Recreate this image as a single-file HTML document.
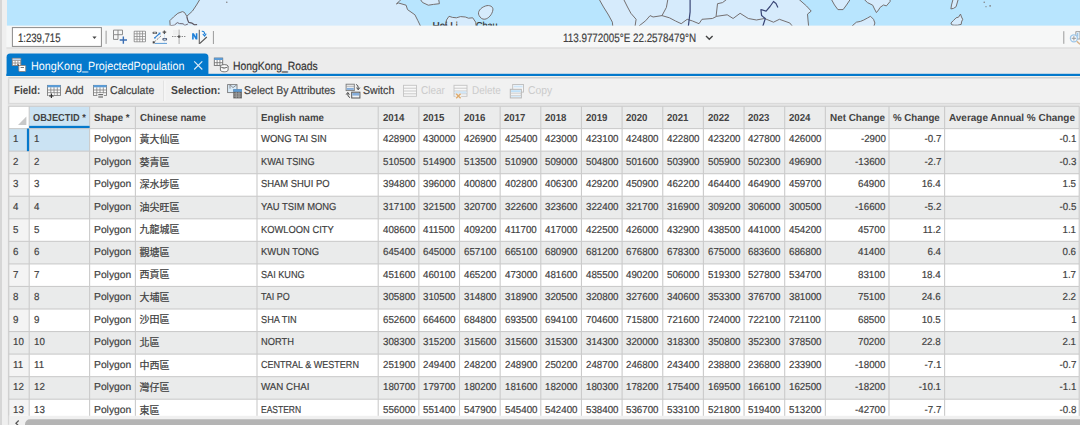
<!DOCTYPE html>
<html lang="en">
<head>
<meta charset="utf-8">
<title>HongKong_ProjectedPopulation</title>
<style>
html,body{margin:0;padding:0;}
body{width:1080px;height:425px;overflow:hidden;position:relative;background:#ececec;font-family:"Liberation Sans",sans-serif;color:#4a4a4a;}
#app{position:absolute;left:0;top:0;width:1080px;height:425px;overflow:hidden;}
.abs{position:absolute;}
#leftstrip{left:0;top:0;width:1.8px;height:425px;background:#d6d6d6;}
#leftstrip2{left:1.8px;top:0;width:5.2px;height:425px;background:#efefef;}
#map{left:6.5px;top:0;width:1073.5px;height:25.6px;}
.x{position:absolute;white-space:pre;line-height:14px;height:14px;text-rendering:geometricPrecision;}
.k{-webkit-text-stroke:0.18px currentColor;}
</style>
</head>
<body>
<div id="app">
<div id="leftstrip" class="abs"></div>
<div id="leftstrip2" class="abs"></div>
<svg id="map" class="abs" width="1073.5" height="25.6" viewBox="6.5 0 1073.5 25.6" preserveAspectRatio="none">
<rect x="0" y="0" width="1080" height="26" fill="#b8e5fe"/>
<g fill="#d6ebfc" stroke="#6f6868" stroke-width="0.95" stroke-linejoin="round">
<!-- west land mass with peninsula -->
<path d="M199.6 -1 L196 5 L192 11 L186.3 16.3 L184 12.5 L182 11.6 L177.4 13.3 L173 17 L169.3 20.7 L170 30 L421.9 30 L417.4 20.7 L414.4 14.8 L407 9.6 L405.6 5.2 L398 3 L395.9 3.9 L399 1 L401.1 -1 Z"/>
<path d="M419.6 -1 L422 2.5 L427.8 5.2 L433 4.4 L438.9 3.7 L438.1 -1 Z"/>
<path d="M478.6 15.5 C476.5 12 480 7.6 485 6 C489 4.6 493 6.6 492.4 10 C491.6 14.6 488 18.6 484.4 19.2 C481.6 19.6 479.6 17.6 478.6 15.5 Z"/>
<path d="M444.8 26 L446 20 L448.5 16.3 L452 17.4 L455.9 17.8 L460 16.6 L464.8 17 L468 18.2 L472.2 17.8 L475.2 22.2 L475.9 30 Z"/>
<!-- main land -->
<path d="M598.5 -1 L603 7 L608 15 L611.9 22.2 L612.6 30 L808.5 30 L807.5 20 L807 14.1 L810.7 11.1 L806 6 L798.1 -1 Z"/>
<path d="M830.7 -1 L834 5 L837.4 9.6 L842.6 9.6 L846 5 L850 -1 Z"/>
<path d="M863.3 -1 L867 2.6 L872.2 5.2 L874 9 L875.9 12.6 L878 10 L879.6 7.4 L883 5 L885.9 5.9 L889.6 1.5 L889.6 -1 Z"/>
<path d="M851.5 26 L855.9 22.2 L860 21.4 L863.3 20 L867 18 L870 16.3 L873 19.3 L874.4 23 L872.2 30 Z"/>
<path d="M952.6 -1 L951 5 L950.4 8.9 L953 8.4 L955.6 6.7 L957.8 -1 Z"/>
<path d="M950.4 23 L953 20.5 L955.6 17.8 L958 17.2 L960 14.1 L961 17 L962.2 19.3 L961 22 L960.7 24.4 L957 25.2 L954 25.2 L951.5 25 Z"/>
</g>
<g fill="none" stroke="#6f6868" stroke-width="0.95" stroke-linejoin="round">
<path d="M186.3 16.3 L187 19.5 L188.2 22.4 L191.6 23.2 L193.8 24.8 L196.6 24.6" stroke="#5c5660" stroke-width="1.2"/>
<path d="M170.2 25.6 L173.8 25.2 L176.8 22.6 L179 23.6 L182.6 23.8 L184.4 25.4 L187.4 24" stroke="#6a6470" stroke-width="1"/>
<path d="M623 -1 L627 7 L630.4 13.3 L635.6 19.3 L634 30"/>
<path d="M638.5 26 L645.2 20.7 L649.6 15.6 L652.6 17 L661.5 15.6 L668.9 17.8 L675 21 L680.7 23.7 L686.7 19.3 L692 21 L698.5 23.7 L701.5 19.3 L711.9 18.5 L716.3 16.3 L726.7 14.8 L732.6 18.5 L739.6 13.3 L747.8 18.5 L755.9 20 L764 18.5 L773 22.2 L778.9 19.3 L789.3 23 L795 30"/>
<path d="M667.4 -1 L665.9 7.4 L661.5 15.6"/>
<path d="M726.7 -1 L722 2.6 L717 3.7 L715.6 16.3"/>
</g>
<g fill="none" stroke="#3a4676" stroke-width="1.2" stroke-linejoin="round">
<path d="M689.6 -1 L689.6 11.9 L687.4 30"/>
<path d="M777.4 7.4 L775.5 3.5 L773 1.5 L769.5 6.5 L765.6 11.1 L760.4 9.6 L761.1 15.6 L764.8 18.5 L761.1 30"/>
</g>
<g fill="#7b7474"><circle cx="983.7" cy="2.2" r="0.7"/><circle cx="989.6" cy="5.9" r="0.8"/><circle cx="985.5" cy="6.7" r="0.6"/><circle cx="226.3" cy="2.2" r="0.7"/></g>
<clipPath id="cpl"><rect x="430" y="20" width="27" height="6"/></clipPath><text x="432" y="29" clip-path="url(#cpl)" font-family="Liberation Sans, sans-serif" font-size="10" text-rendering="geometricPrecision" fill="#2c2c2c" stroke="#2c2c2c" stroke-width="0.25">Hei Ling</text>
<text x="475.6" y="29" font-family="Liberation Sans, sans-serif" font-size="10" text-rendering="geometricPrecision" fill="#2c2c2c" stroke="#2c2c2c" stroke-width="0.25" textLength="21.5" lengthAdjust="spacingAndGlyphs">Chau</text>
</svg>

<svg id="chrome" width="1080" height="425" viewBox="0 0 1080 425" style="position:absolute;left:0;top:0">
<!-- map toolbar -->
<rect x="6.4" y="25.6" width="1073.6" height="21.6" fill="#f6f7f7"/>
<rect x="6.4" y="47.2" width="1073.6" height="1.8" fill="#e1e1e1"/>
<rect x="12.4" y="27.6" width="89" height="18.8" fill="#fff" stroke="#8a8a8a" stroke-width="1"/>
<!-- tab bar -->
<rect x="6.4" y="49" width="1073.6" height="25" fill="#ececec"/>
<path d="M6.6 76 V57.2 Q6.6 53.6 10.2 53.6 H204.8 Q208.4 53.6 208.4 57.2 V76 Z" fill="#0479cc"/>
<rect x="6.4" y="73.8" width="1073.6" height="2.25" fill="#0479cc"/>
<rect x="6.4" y="76.05" width="1073.6" height="0.9" fill="#fbf6f0"/>
<!-- field bar -->
<rect x="8.2" y="76.9" width="1071.8" height="1.8" fill="#d1d1d1"/>
<rect x="8.2" y="78.7" width="1071.8" height="24.15" fill="#f1f1f1"/>
<rect x="8.2" y="78.75" width="1.1" height="346" fill="#d2d2d2"/>
<rect x="8.2" y="102.85" width="1071.8" height="1.6" fill="#dadada"/><rect x="8.2" y="104.45" width="1071.8" height="1.8" fill="#e8e8e8"/>
<!-- right strip + scrollbar -->
<rect x="1079.6" y="106" width="0.4" height="319" fill="#e3e3e3"/>
<rect x="9.3" y="416.2" width="1070.7" height="8.8" fill="#f0f0f0"/>
<rect x="25" y="419.3" width="1070" height="10" rx="5" fill="#b4b4b4"/>
</svg>
<svg id="grid" width="1080" height="425" viewBox="0 0 1080 425" style="position:absolute;left:0;top:0">
<rect x="8.75" y="106.25" width="1070.45" height="309.55" fill="#fff"/>
<rect x="29.20" y="106.25" width="1050.00" height="22.35" fill="#ebecec"/>
<rect x="8.75" y="128.60" width="20.45" height="22.55" fill="#f4f4f4"/>
<rect x="8.75" y="151.15" width="1070.45" height="22.55" fill="#eaebeb"/>
<rect x="8.75" y="173.70" width="20.45" height="22.55" fill="#f4f4f4"/>
<rect x="8.75" y="196.25" width="1070.45" height="22.55" fill="#eaebeb"/>
<rect x="8.75" y="218.80" width="20.45" height="22.55" fill="#f4f4f4"/>
<rect x="8.75" y="241.35" width="1070.45" height="22.55" fill="#eaebeb"/>
<rect x="8.75" y="263.90" width="20.45" height="22.55" fill="#f4f4f4"/>
<rect x="8.75" y="286.45" width="1070.45" height="22.55" fill="#eaebeb"/>
<rect x="8.75" y="309.00" width="20.45" height="22.55" fill="#f4f4f4"/>
<rect x="8.75" y="331.55" width="1070.45" height="22.55" fill="#eaebeb"/>
<rect x="8.75" y="354.10" width="20.45" height="22.55" fill="#f4f4f4"/>
<rect x="8.75" y="376.65" width="1070.45" height="22.55" fill="#eaebeb"/>
<rect x="8.75" y="399.20" width="20.45" height="16.60" fill="#f4f4f4"/>
<rect x="29.20" y="106.25" width="60.40" height="22.35" fill="#cbe3f3"/>
<rect x="8.75" y="128.60" width="80.85" height="22.55" fill="#cbe3f3"/>
<rect x="8.75" y="128.05" width="1070.45" height="1.1" fill="#cbcbcb"/>
<rect x="8.75" y="150.60" width="1070.45" height="1.1" fill="#cbcbcb"/>
<rect x="8.75" y="173.15" width="1070.45" height="1.1" fill="#cbcbcb"/>
<rect x="8.75" y="195.70" width="1070.45" height="1.1" fill="#cbcbcb"/>
<rect x="8.75" y="218.25" width="1070.45" height="1.1" fill="#cbcbcb"/>
<rect x="8.75" y="240.80" width="1070.45" height="1.1" fill="#cbcbcb"/>
<rect x="8.75" y="263.35" width="1070.45" height="1.1" fill="#cbcbcb"/>
<rect x="8.75" y="285.90" width="1070.45" height="1.1" fill="#cbcbcb"/>
<rect x="8.75" y="308.45" width="1070.45" height="1.1" fill="#cbcbcb"/>
<rect x="8.75" y="331.00" width="1070.45" height="1.1" fill="#cbcbcb"/>
<rect x="8.75" y="353.55" width="1070.45" height="1.1" fill="#cbcbcb"/>
<rect x="8.75" y="376.10" width="1070.45" height="1.1" fill="#cbcbcb"/>
<rect x="8.75" y="398.65" width="1070.45" height="1.1" fill="#cbcbcb"/>
<rect x="8.75" y="105.70" width="1070.45" height="1.1" fill="#cbcbcb"/>
<rect x="8.20" y="106.25" width="1.1" height="309.55" fill="#cbcbcb"/>
<rect x="28.65" y="106.25" width="1.1" height="309.55" fill="#cbcbcb"/>
<rect x="89.05" y="106.25" width="1.1" height="309.55" fill="#cbcbcb"/>
<rect x="134.85" y="106.25" width="1.1" height="309.55" fill="#cbcbcb"/>
<rect x="256.45" y="106.25" width="1.1" height="309.55" fill="#cbcbcb"/>
<rect x="377.65" y="106.25" width="1.1" height="309.55" fill="#cbcbcb"/>
<rect x="418.30" y="106.25" width="1.1" height="309.55" fill="#cbcbcb"/>
<rect x="458.95" y="106.25" width="1.1" height="309.55" fill="#cbcbcb"/>
<rect x="499.60" y="106.25" width="1.1" height="309.55" fill="#cbcbcb"/>
<rect x="540.25" y="106.25" width="1.1" height="309.55" fill="#cbcbcb"/>
<rect x="580.90" y="106.25" width="1.1" height="309.55" fill="#cbcbcb"/>
<rect x="621.55" y="106.25" width="1.1" height="309.55" fill="#cbcbcb"/>
<rect x="662.20" y="106.25" width="1.1" height="309.55" fill="#cbcbcb"/>
<rect x="702.85" y="106.25" width="1.1" height="309.55" fill="#cbcbcb"/>
<rect x="743.50" y="106.25" width="1.1" height="309.55" fill="#cbcbcb"/>
<rect x="784.15" y="106.25" width="1.1" height="309.55" fill="#cbcbcb"/>
<rect x="824.80" y="106.25" width="1.1" height="309.55" fill="#cbcbcb"/>
<rect x="888.45" y="106.25" width="1.1" height="309.55" fill="#cbcbcb"/>
<rect x="944.05" y="106.25" width="1.1" height="309.55" fill="#cbcbcb"/>
<rect x="1078.65" y="106.25" width="1.1" height="309.55" fill="#cbcbcb"/>
<rect x="29.20" y="125.85" width="60.40" height="2.2" fill="#0479cc"/>
<rect x="26.90" y="128.60" width="2.2" height="22.55" fill="#0479cc"/>
<path d="M18 125 L26.4 125 L26.4 116.6 Z" fill="#c8c8c8"/>
<g fill="#414141" stroke="#414141" stroke-width="0.22" stroke-linejoin="round" font-family="&quot;Liberation Sans&quot;, &quot;Noto Sans CJK TC&quot;, sans-serif" font-size="10">
<text x="139.60" y="143.00">黃大仙區</text>
<text x="139.60" y="165.55">葵青區</text>
<text x="139.60" y="188.10">深水埗區</text>
<text x="139.60" y="210.65">油尖旺區</text>
<text x="139.60" y="233.20">九龍城區</text>
<text x="139.60" y="255.75">觀塘區</text>
<text x="139.60" y="278.30">西貢區</text>
<text x="139.60" y="300.85">大埔區</text>
<text x="139.60" y="323.40">沙田區</text>
<text x="139.60" y="345.95">北區</text>
<text x="139.60" y="368.50">中西區</text>
<text x="139.60" y="391.05">灣仔區</text>
<text x="139.60" y="413.60">東區</text>
</g>
</svg>
<svg id="icons" width="1080" height="425" viewBox="0 0 1080 425" style="position:absolute;left:0;top:0">
<!-- ===== map toolbar ===== -->
<rect x="105.6" y="30.7" width="1" height="13.2" fill="#9b9b9b"/>
<!-- grid + plus -->
<g fill="none" stroke="#808080" stroke-width="0.9">
<path d="M113.5 30.1 H122.5 V34.7 H113.5 Z M118 30.1 V39.4 M113.5 34.7 V39.4 H118"/>
</g>
<path d="M119.7 40 H127 M123.35 36.4 V43.7" stroke="#3b6fb4" stroke-width="1.4" fill="none"/>
<!-- 4x4 grid -->
<rect x="133.7" y="30.7" width="12.2" height="11.6" rx="1" fill="#8e8e8e"/>
<g fill="#fbfbfb">
<rect x="134.6" y="31.6" width="2" height="1.85"/><rect x="137.4" y="31.6" width="2" height="1.85"/><rect x="140.2" y="31.6" width="2" height="1.85"/><rect x="143" y="31.6" width="2" height="1.85"/>
<rect x="134.6" y="34.25" width="2" height="1.85"/><rect x="137.4" y="34.25" width="2" height="1.85"/><rect x="140.2" y="34.25" width="2" height="1.85"/><rect x="143" y="34.25" width="2" height="1.85"/>
<rect x="134.6" y="36.9" width="2" height="1.85"/><rect x="137.4" y="36.9" width="2" height="1.85"/><rect x="140.2" y="36.9" width="2" height="1.85"/><rect x="143" y="36.9" width="2" height="1.85"/>
<rect x="134.6" y="39.55" width="2" height="1.85"/><rect x="137.4" y="39.55" width="2" height="1.85"/><rect x="140.2" y="39.55" width="2" height="1.85"/><rect x="143" y="39.55" width="2" height="1.85"/>
</g>
<!-- link / snapping icon -->
<rect x="152.5" y="31.7" width="4.6" height="2.4" rx="1" fill="#5a5a5a"/>
<rect x="153.7" y="32.4" width="2.2" height="1" fill="#d9d9d9"/>
<path d="M155 37.7 L159.6 33.5" stroke="#2f80d3" stroke-width="1.1" fill="none"/>
<path d="M158.2 32.8 L160.6 32.6 L160.2 35 Z" fill="#2f80d3"/>
<circle cx="154.9" cy="37.8" r="0.9" fill="#2f80d3"/>
<path d="M155.4 41 L161.6 35.4" stroke="#555" stroke-width="1" stroke-dasharray="1 1.2" fill="none"/>
<rect x="152.7" y="41.3" width="2.1" height="2.1" fill="#444"/>
<rect x="154.8" y="42.9" width="12.2" height="1" fill="#5b9bd5"/>
<path d="M164.4 30.4 V34 M162.6 32.2 H166.2" stroke="#555" stroke-width="1.3" fill="none"/>
<rect x="164" y="34" width="1" height="9" fill="#d3e6f6"/>
<rect x="162.4" y="38.1" width="4.7" height="2.5" rx="1" fill="#4a5a78"/>
<rect x="163.6" y="38.8" width="2.2" height="1" fill="#e8eef6"/>
<!-- crosshair -->
<rect x="178.5" y="29.6" width="1.2" height="14.4" fill="#b7b7b7"/>
<path d="M172 36.5 H186" stroke="#8a8a8a" stroke-width="1" stroke-dasharray="1.4 1" fill="none"/>
<rect x="178" y="35.5" width="2.2" height="2.2" fill="#555"/>
<rect x="173" y="30" width="5" height="5" fill="#ececec" opacity="0.7"/>
<!-- N arrow -->
<path d="M192.1 39.4 V33.2 H193.9 L195.8 36.6 V33.2 H197.4 V39.4 H195.7 L193.7 35.9 V39.4 Z" fill="#1f80d8"/>
<rect x="198.7" y="29.8" width="1.3" height="14.2" fill="#7c7c7c"/>
<path d="M199.6 43.6 L206.8 37" stroke="#555" stroke-width="1.2" fill="none"/>
<path d="M201.8 31.4 C203.6 31 204.8 32.2 204.6 34.2" stroke="#1f80d8" stroke-width="1.1" fill="none"/>
<path d="M202.8 33.8 L204.6 36 L206.2 33.6" stroke="#1f80d8" stroke-width="1.1" fill="none"/>
<rect x="212.9" y="31" width="1" height="13" fill="#9b9b9b"/>
<!-- right end -->
<rect x="1063.3" y="31.2" width="1" height="12.6" fill="#9b9b9b"/>
<path d="M1075.8 31.6 H1080 V39 H1075.8 Z" fill="#e3f0fa" stroke="#9a9a9a" stroke-width="0.9"/>
<path d="M1077.6 33 V36.5" stroke="#9cc5e6" stroke-width="1.2" fill="none"/>
<circle cx="1073.9" cy="38.3" r="3.5" fill="#f5f9fc" stroke="#9fc7e8" stroke-width="1.3"/>
<path d="M1071.7 38.3 H1076.1 M1073.9 36.1 V40.5" stroke="#9a9a9a" stroke-width="1" fill="none"/>
<path d="M1076.7 41.2 L1080 44.2" stroke="#d9b48c" stroke-width="1.5" fill="none"/>
<!-- dropdown chevron after coords -->
<path d="M706 36 L709.3 39.3 L712.6 36" fill="none" stroke="#444" stroke-width="1.4"/>
<!-- scale dropdown arrow -->
<path d="M92.4 36.5 L96.6 36.5 L94.5 39 Z" fill="#444"/>

<!-- ===== tab icons ===== -->
<!-- active tab -->
<rect x="12.3" y="58.3" width="8.5" height="7.2" fill="#fff" stroke="#8d837f" stroke-width="0.9"/>
<path d="M12.3 60.5 H20.8 M12.3 63 H20.8 M15.1 60.5 V65.5 M17.9 60.5 V65.5" stroke="#8d837f" stroke-width="0.8" fill="none"/>
<rect x="12.7" y="58.7" width="7.7" height="1.5" fill="#c9d7ea"/>
<path d="M17.6 64.4 L19.4 66.2" stroke="#444" stroke-width="1.1" fill="none"/>
<rect x="18.8" y="65.5" width="6.9" height="6" rx="0.8" fill="#fff" stroke="#8d837f" stroke-width="0.9"/>
<rect x="20.6" y="67" width="3.4" height="1" fill="#777"/>
<!-- inactive tab -->
<rect x="214.3" y="58.1" width="8.4" height="7.3" fill="#fdfdfd" stroke="#6c6c6c" stroke-width="0.9"/>
<rect x="214.3" y="57.8" width="8.4" height="2.2" fill="#5b9bd5"/>
<path d="M214.3 62.7 H222.7 M217.1 60 V65.4 M219.9 60 V65.4" stroke="#6c6c6c" stroke-width="0.8" fill="none"/>
<path d="M220.4 66.2 V70 C220.4 72.4 228.1 72.4 228.1 70 V66.2" fill="#fbfbfb" stroke="#666" stroke-width="0.9"/>
<ellipse cx="224.25" cy="66.2" rx="3.85" ry="1.6" fill="#fbfbfb" stroke="#666" stroke-width="0.9"/>
<path d="M222.6 68.6 H225.4" stroke="#999" stroke-width="0.8"/>
<!-- close X -->
<path d="M194.2 61.4 L202.3 69.5 M202.3 61.4 L194.2 69.5" stroke="#dcebf8" stroke-width="1.15" fill="none"/>

<!-- ===== field bar icons ===== -->
<!-- Add -->
<g>
<rect x="47.5" y="85.4" width="13" height="10" fill="#fafafa" stroke="#7d7d7d" stroke-width="0.9"/>
<rect x="47.5" y="85" width="13" height="2.3" fill="#5b9bd5"/>
<path d="M47.5 90 H60.5 M47.5 92.7 H60.5 M50.8 87.3 V95.4 M54 87.3 V95.4 M57.3 87.3 V95.4" stroke="#7d7d7d" stroke-width="0.8" fill="none"/>
<rect x="48.6" y="93.2" width="5.4" height="4.6" fill="#f0f0f0"/>
<path d="M49.1 95.8 H53.7 M51.4 93.5 V98.1" stroke="#333" stroke-width="1.2" fill="none"/>
</g>
<!-- Calculate -->
<g>
<rect x="93.5" y="85.4" width="13" height="10" fill="#fafafa" stroke="#7d7d7d" stroke-width="0.9"/>
<rect x="93.5" y="85" width="13" height="2.3" fill="#5b9bd5"/>
<path d="M93.5 90 H106.5 M93.5 92.7 H106.5 M96.8 87.3 V95.4 M100 87.3 V95.4 M103.3 87.3 V95.4" stroke="#7d7d7d" stroke-width="0.8" fill="none"/>
<rect x="97.4" y="93.2" width="6.4" height="5" fill="#f4f4f4"/>
<path d="M98.3 94.7 H103 M98.3 97 H103" stroke="#444" stroke-width="0.95" fill="none"/>
</g>
<rect x="163.3" y="80.5" width="1" height="20.5" fill="#dcdcdc"/>
<rect x="164.3" y="80.5" width="1" height="20.5" fill="#fafafa"/>
<!-- Select by attributes -->
<rect x="227.6" y="84.6" width="9.4" height="8" fill="#d9ebf9" stroke="#7a7a7a" stroke-width="0.9"/>
<path d="M230 84.6 V88.6 M230 84.8 L233 87.6 L236.8 84.8" stroke="#7a7a7a" stroke-width="0.8" fill="none"/>
<rect x="233.3" y="89.2" width="8.6" height="9.2" fill="#666"/>
<rect x="233.3" y="89.2" width="8.6" height="2.6" fill="#5b9bd5"/>
<path d="M234 93.9 H241.2 M234 96.1 H241.2 M236.2 92 V98 M239 92 V98" stroke="#b5b5b5" stroke-width="0.7" fill="none"/>
<!-- Switch -->
<rect x="346.1" y="84.2" width="8.2" height="6.4" fill="#f3f3f3" stroke="#777" stroke-width="0.9"/>
<path d="M346.1 86.3 H354.3" stroke="#999" stroke-width="0.7"/>
<rect x="346.6" y="87.9" width="7.2" height="2" fill="#86aedb"/>
<rect x="351.7" y="92.2" width="8.2" height="5.8" fill="#f3f3f3" stroke="#555" stroke-width="1"/>
<rect x="352.3" y="93" width="7" height="2.6" fill="#86aedb"/>
<path d="M356.2 84.6 C357.6 84.8 358.2 86 358.2 88.8 M356.6 87.6 L358.2 89.8 L359.8 87.6" stroke="#444" stroke-width="1" fill="none"/>
<path d="M350 97.4 C348.4 97.2 347.8 96 347.8 93.4 M346.2 94.6 L347.8 92.4 L349.4 94.6" stroke="#444" stroke-width="1" fill="none"/>
<!-- Clear (disabled) -->
<rect x="403.5" y="85.3" width="13" height="11" fill="#f8f8f8" stroke="#c4c4c4" stroke-width="0.9"/>
<path d="M403.5 88.2 H416.5 M403.5 91 H416.5 M403.5 93.8 H416.5" stroke="#c4c4c4" stroke-width="0.9" fill="none"/>
<!-- Delete (disabled) -->
<rect x="454" y="85.3" width="13" height="11" fill="#f8f8f8" stroke="#c4c4c4" stroke-width="0.9"/>
<path d="M454 88.2 H467 M454 91 H467 M454 93.8 H467" stroke="#c4c4c4" stroke-width="0.9" fill="none"/>
<rect x="455" y="91.4" width="11.4" height="2" fill="#cfe7f9"/>
<rect x="455.6" y="93.4" width="5.6" height="5" fill="#f0f0f0"/>
<path d="M456.2 93.8 L460.6 98.2 M460.6 93.8 L456.2 98.2" stroke="#deaa6c" stroke-width="1.4" fill="none"/>
<!-- Copy (disabled) -->
<rect x="512.7" y="84.5" width="10.8" height="7.6" fill="#f8f8f8" stroke="#bdbdbd" stroke-width="0.9"/>
<rect x="513.6" y="85.6" width="9" height="1.8" fill="#cfe7f9"/>
<rect x="510.3" y="89.3" width="11" height="8.6" fill="#f8f8f8" stroke="#b5b5b5" stroke-width="1"/>
<rect x="511" y="90.2" width="9.6" height="2" fill="#bfe0f8"/>
<path d="M510.3 93.2 H521.3 M510.3 95.4 H521.3" stroke="#c4c4c4" stroke-width="0.8" fill="none"/>
<rect x="511" y="95.8" width="9.6" height="1.2" fill="#d4eafa"/>
<!-- scrollbar arrow -->
<path d="M18.7 420.5 L15.9 423.2 L18.7 425.9" fill="none" stroke="#555" stroke-width="1.2"/>
</svg>

<div class="x" style="top:112px;font-size:10.2px;color:#434343;transform:translateY(0.40px) scaleX(0.9055);font-weight:bold;left:33.40px;transform-origin:0 50%;">OBJECTID *</div>
<div class="x" style="top:112px;font-size:10.2px;color:#434343;transform:translateY(0.40px) scaleX(0.9498);font-weight:bold;left:93.90px;transform-origin:0 50%;">Shape *</div>
<div class="x" style="top:112px;font-size:10.2px;color:#434343;transform:translateY(0.40px) scaleX(0.9525);font-weight:bold;left:139.70px;transform-origin:0 50%;">Chinese name</div>
<div class="x" style="top:112px;font-size:10.2px;color:#434343;transform:translateY(0.40px) scaleX(0.9512);font-weight:bold;left:261.30px;transform-origin:0 50%;">English name</div>
<div class="x" style="top:112px;font-size:10.2px;color:#434343;transform:translateY(0.40px) scaleX(0.9483);font-weight:bold;left:382.50px;transform-origin:0 50%;">2014</div>
<div class="x" style="top:112px;font-size:10.2px;color:#434343;transform:translateY(0.40px) scaleX(0.9483);font-weight:bold;left:423.15px;transform-origin:0 50%;">2015</div>
<div class="x" style="top:112px;font-size:10.2px;color:#434343;transform:translateY(0.40px) scaleX(0.9483);font-weight:bold;left:463.80px;transform-origin:0 50%;">2016</div>
<div class="x" style="top:112px;font-size:10.2px;color:#434343;transform:translateY(0.40px) scaleX(0.9483);font-weight:bold;left:504.45px;transform-origin:0 50%;">2017</div>
<div class="x" style="top:112px;font-size:10.2px;color:#434343;transform:translateY(0.40px) scaleX(0.9483);font-weight:bold;left:545.10px;transform-origin:0 50%;">2018</div>
<div class="x" style="top:112px;font-size:10.2px;color:#434343;transform:translateY(0.40px) scaleX(0.9483);font-weight:bold;left:585.75px;transform-origin:0 50%;">2019</div>
<div class="x" style="top:112px;font-size:10.2px;color:#434343;transform:translateY(0.40px) scaleX(0.9483);font-weight:bold;left:626.40px;transform-origin:0 50%;">2020</div>
<div class="x" style="top:112px;font-size:10.2px;color:#434343;transform:translateY(0.40px) scaleX(0.9483);font-weight:bold;left:667.05px;transform-origin:0 50%;">2021</div>
<div class="x" style="top:112px;font-size:10.2px;color:#434343;transform:translateY(0.40px) scaleX(0.9483);font-weight:bold;left:707.70px;transform-origin:0 50%;">2022</div>
<div class="x" style="top:112px;font-size:10.2px;color:#434343;transform:translateY(0.40px) scaleX(0.9483);font-weight:bold;left:748.35px;transform-origin:0 50%;">2023</div>
<div class="x" style="top:112px;font-size:10.2px;color:#434343;transform:translateY(0.40px) scaleX(0.9483);font-weight:bold;left:789.00px;transform-origin:0 50%;">2024</div>
<div class="x" style="top:112px;font-size:10.2px;color:#434343;transform:translateY(0.40px) scaleX(0.9716);font-weight:bold;left:829.65px;transform-origin:0 50%;">Net Change</div>
<div class="x" style="top:112px;font-size:10.2px;color:#434343;transform:translateY(0.40px) scaleX(0.9492);font-weight:bold;left:893.30px;transform-origin:0 50%;">% Change</div>
<div class="x" style="top:112px;font-size:10.2px;color:#434343;transform:translateY(0.40px) scaleX(0.9776);font-weight:bold;left:948.90px;transform-origin:0 50%;">Average Annual % Change</div>
<div class="x k" style="top:133px;font-size:10.1px;color:#414141;transform:translateY(0.35px) scaleX(0.9650);left:13.20px;transform-origin:0 50%;">1</div>
<div class="x k" style="top:133px;font-size:10.1px;color:#414141;transform:translateY(0.35px) scaleX(0.9650);left:33.50px;transform-origin:0 50%;">1</div>
<div class="x k" style="top:133px;font-size:10.1px;color:#414141;transform:translateY(0.35px) scaleX(1.0224);left:93.90px;transform-origin:0 50%;">Polygon</div>
<div class="x k" style="top:133px;font-size:10.1px;color:#414141;transform:translateY(0.35px) scaleX(0.9421);left:261.10px;transform-origin:0 50%;">WONG TAI SIN</div>
<div class="x k" style="top:133px;font-size:10.1px;color:#414141;transform:translateY(0.35px) scaleX(0.9650);left:382.55px;transform-origin:0 50%;">428900</div>
<div class="x k" style="top:133px;font-size:10.1px;color:#414141;transform:translateY(0.35px) scaleX(0.9650);left:423.20px;transform-origin:0 50%;">430000</div>
<div class="x k" style="top:133px;font-size:10.1px;color:#414141;transform:translateY(0.35px) scaleX(0.9650);left:463.85px;transform-origin:0 50%;">426900</div>
<div class="x k" style="top:133px;font-size:10.1px;color:#414141;transform:translateY(0.35px) scaleX(0.9650);left:504.50px;transform-origin:0 50%;">425400</div>
<div class="x k" style="top:133px;font-size:10.1px;color:#414141;transform:translateY(0.35px) scaleX(0.9650);left:545.15px;transform-origin:0 50%;">423000</div>
<div class="x k" style="top:133px;font-size:10.1px;color:#414141;transform:translateY(0.35px) scaleX(0.9650);left:585.80px;transform-origin:0 50%;">423100</div>
<div class="x k" style="top:133px;font-size:10.1px;color:#414141;transform:translateY(0.35px) scaleX(0.9650);left:626.45px;transform-origin:0 50%;">424800</div>
<div class="x k" style="top:133px;font-size:10.1px;color:#414141;transform:translateY(0.35px) scaleX(0.9650);left:667.10px;transform-origin:0 50%;">422800</div>
<div class="x k" style="top:133px;font-size:10.1px;color:#414141;transform:translateY(0.35px) scaleX(0.9650);left:707.75px;transform-origin:0 50%;">423200</div>
<div class="x k" style="top:133px;font-size:10.1px;color:#414141;transform:translateY(0.35px) scaleX(0.9650);left:748.40px;transform-origin:0 50%;">427800</div>
<div class="x k" style="top:133px;font-size:10.1px;color:#414141;transform:translateY(0.35px) scaleX(0.9650);left:789.05px;transform-origin:0 50%;">426000</div>
<div class="x k" style="top:133px;font-size:10.1px;color:#414141;transform:translateY(0.35px) scaleX(0.9650);right:194.60px;transform-origin:100% 50%;">-2900</div>
<div class="x k" style="top:133px;font-size:10.1px;color:#414141;transform:translateY(0.35px) scaleX(0.9650);right:139.00px;transform-origin:100% 50%;">-0.7</div>
<div class="x k" style="top:133px;font-size:10.1px;color:#414141;transform:translateY(0.35px) scaleX(0.9650);right:3.80px;transform-origin:100% 50%;">-0.1</div>
<div class="x k" style="top:155px;font-size:10.1px;color:#414141;transform:translateY(0.90px) scaleX(0.9650);left:13.20px;transform-origin:0 50%;">2</div>
<div class="x k" style="top:155px;font-size:10.1px;color:#414141;transform:translateY(0.90px) scaleX(0.9650);left:33.50px;transform-origin:0 50%;">2</div>
<div class="x k" style="top:155px;font-size:10.1px;color:#414141;transform:translateY(0.90px) scaleX(1.0224);left:93.90px;transform-origin:0 50%;">Polygon</div>
<div class="x k" style="top:155px;font-size:10.1px;color:#414141;transform:translateY(0.90px) scaleX(0.9102);left:261.10px;transform-origin:0 50%;">KWAI TSING</div>
<div class="x k" style="top:155px;font-size:10.1px;color:#414141;transform:translateY(0.90px) scaleX(0.9650);left:382.55px;transform-origin:0 50%;">510500</div>
<div class="x k" style="top:155px;font-size:10.1px;color:#414141;transform:translateY(0.90px) scaleX(0.9650);left:423.20px;transform-origin:0 50%;">514900</div>
<div class="x k" style="top:155px;font-size:10.1px;color:#414141;transform:translateY(0.90px) scaleX(0.9650);left:463.85px;transform-origin:0 50%;">513500</div>
<div class="x k" style="top:155px;font-size:10.1px;color:#414141;transform:translateY(0.90px) scaleX(0.9650);left:504.50px;transform-origin:0 50%;">510900</div>
<div class="x k" style="top:155px;font-size:10.1px;color:#414141;transform:translateY(0.90px) scaleX(0.9650);left:545.15px;transform-origin:0 50%;">509000</div>
<div class="x k" style="top:155px;font-size:10.1px;color:#414141;transform:translateY(0.90px) scaleX(0.9650);left:585.80px;transform-origin:0 50%;">504800</div>
<div class="x k" style="top:155px;font-size:10.1px;color:#414141;transform:translateY(0.90px) scaleX(0.9650);left:626.45px;transform-origin:0 50%;">501600</div>
<div class="x k" style="top:155px;font-size:10.1px;color:#414141;transform:translateY(0.90px) scaleX(0.9650);left:667.10px;transform-origin:0 50%;">503900</div>
<div class="x k" style="top:155px;font-size:10.1px;color:#414141;transform:translateY(0.90px) scaleX(0.9650);left:707.75px;transform-origin:0 50%;">505900</div>
<div class="x k" style="top:155px;font-size:10.1px;color:#414141;transform:translateY(0.90px) scaleX(0.9650);left:748.40px;transform-origin:0 50%;">502300</div>
<div class="x k" style="top:155px;font-size:10.1px;color:#414141;transform:translateY(0.90px) scaleX(0.9650);left:789.05px;transform-origin:0 50%;">496900</div>
<div class="x k" style="top:155px;font-size:10.1px;color:#414141;transform:translateY(0.90px) scaleX(0.9650);right:194.60px;transform-origin:100% 50%;">-13600</div>
<div class="x k" style="top:155px;font-size:10.1px;color:#414141;transform:translateY(0.90px) scaleX(0.9650);right:139.00px;transform-origin:100% 50%;">-2.7</div>
<div class="x k" style="top:155px;font-size:10.1px;color:#414141;transform:translateY(0.90px) scaleX(0.9650);right:3.80px;transform-origin:100% 50%;">-0.3</div>
<div class="x k" style="top:178px;font-size:10.1px;color:#414141;transform:translateY(0.45px) scaleX(0.9650);left:13.20px;transform-origin:0 50%;">3</div>
<div class="x k" style="top:178px;font-size:10.1px;color:#414141;transform:translateY(0.45px) scaleX(0.9650);left:33.50px;transform-origin:0 50%;">3</div>
<div class="x k" style="top:178px;font-size:10.1px;color:#414141;transform:translateY(0.45px) scaleX(1.0224);left:93.90px;transform-origin:0 50%;">Polygon</div>
<div class="x k" style="top:178px;font-size:10.1px;color:#414141;transform:translateY(0.45px) scaleX(0.9322);left:261.10px;transform-origin:0 50%;">SHAM SHUI PO</div>
<div class="x k" style="top:178px;font-size:10.1px;color:#414141;transform:translateY(0.45px) scaleX(0.9650);left:382.55px;transform-origin:0 50%;">394800</div>
<div class="x k" style="top:178px;font-size:10.1px;color:#414141;transform:translateY(0.45px) scaleX(0.9650);left:423.20px;transform-origin:0 50%;">396000</div>
<div class="x k" style="top:178px;font-size:10.1px;color:#414141;transform:translateY(0.45px) scaleX(0.9650);left:463.85px;transform-origin:0 50%;">400800</div>
<div class="x k" style="top:178px;font-size:10.1px;color:#414141;transform:translateY(0.45px) scaleX(0.9650);left:504.50px;transform-origin:0 50%;">402800</div>
<div class="x k" style="top:178px;font-size:10.1px;color:#414141;transform:translateY(0.45px) scaleX(0.9650);left:545.15px;transform-origin:0 50%;">406300</div>
<div class="x k" style="top:178px;font-size:10.1px;color:#414141;transform:translateY(0.45px) scaleX(0.9650);left:585.80px;transform-origin:0 50%;">429200</div>
<div class="x k" style="top:178px;font-size:10.1px;color:#414141;transform:translateY(0.45px) scaleX(0.9650);left:626.45px;transform-origin:0 50%;">450900</div>
<div class="x k" style="top:178px;font-size:10.1px;color:#414141;transform:translateY(0.45px) scaleX(0.9650);left:667.10px;transform-origin:0 50%;">462200</div>
<div class="x k" style="top:178px;font-size:10.1px;color:#414141;transform:translateY(0.45px) scaleX(0.9650);left:707.75px;transform-origin:0 50%;">464400</div>
<div class="x k" style="top:178px;font-size:10.1px;color:#414141;transform:translateY(0.45px) scaleX(0.9650);left:748.40px;transform-origin:0 50%;">464900</div>
<div class="x k" style="top:178px;font-size:10.1px;color:#414141;transform:translateY(0.45px) scaleX(0.9650);left:789.05px;transform-origin:0 50%;">459700</div>
<div class="x k" style="top:178px;font-size:10.1px;color:#414141;transform:translateY(0.45px) scaleX(0.9650);right:194.60px;transform-origin:100% 50%;">64900</div>
<div class="x k" style="top:178px;font-size:10.1px;color:#414141;transform:translateY(0.45px) scaleX(0.9650);right:139.00px;transform-origin:100% 50%;">16.4</div>
<div class="x k" style="top:178px;font-size:10.1px;color:#414141;transform:translateY(0.45px) scaleX(0.9650);right:3.80px;transform-origin:100% 50%;">1.5</div>
<div class="x k" style="top:201px;font-size:10.1px;color:#414141;transform:translateY(0.00px) scaleX(0.9650);left:13.20px;transform-origin:0 50%;">4</div>
<div class="x k" style="top:201px;font-size:10.1px;color:#414141;transform:translateY(0.00px) scaleX(0.9650);left:33.50px;transform-origin:0 50%;">4</div>
<div class="x k" style="top:201px;font-size:10.1px;color:#414141;transform:translateY(0.00px) scaleX(1.0224);left:93.90px;transform-origin:0 50%;">Polygon</div>
<div class="x k" style="top:201px;font-size:10.1px;color:#414141;transform:translateY(0.00px) scaleX(0.9314);left:261.10px;transform-origin:0 50%;">YAU TSIM MONG</div>
<div class="x k" style="top:201px;font-size:10.1px;color:#414141;transform:translateY(0.00px) scaleX(0.9650);left:382.55px;transform-origin:0 50%;">317100</div>
<div class="x k" style="top:201px;font-size:10.1px;color:#414141;transform:translateY(0.00px) scaleX(0.9650);left:423.20px;transform-origin:0 50%;">321500</div>
<div class="x k" style="top:201px;font-size:10.1px;color:#414141;transform:translateY(0.00px) scaleX(0.9650);left:463.85px;transform-origin:0 50%;">320700</div>
<div class="x k" style="top:201px;font-size:10.1px;color:#414141;transform:translateY(0.00px) scaleX(0.9650);left:504.50px;transform-origin:0 50%;">322600</div>
<div class="x k" style="top:201px;font-size:10.1px;color:#414141;transform:translateY(0.00px) scaleX(0.9650);left:545.15px;transform-origin:0 50%;">323600</div>
<div class="x k" style="top:201px;font-size:10.1px;color:#414141;transform:translateY(0.00px) scaleX(0.9650);left:585.80px;transform-origin:0 50%;">322400</div>
<div class="x k" style="top:201px;font-size:10.1px;color:#414141;transform:translateY(0.00px) scaleX(0.9650);left:626.45px;transform-origin:0 50%;">321700</div>
<div class="x k" style="top:201px;font-size:10.1px;color:#414141;transform:translateY(0.00px) scaleX(0.9650);left:667.10px;transform-origin:0 50%;">316900</div>
<div class="x k" style="top:201px;font-size:10.1px;color:#414141;transform:translateY(0.00px) scaleX(0.9650);left:707.75px;transform-origin:0 50%;">309200</div>
<div class="x k" style="top:201px;font-size:10.1px;color:#414141;transform:translateY(0.00px) scaleX(0.9650);left:748.40px;transform-origin:0 50%;">306000</div>
<div class="x k" style="top:201px;font-size:10.1px;color:#414141;transform:translateY(0.00px) scaleX(0.9650);left:789.05px;transform-origin:0 50%;">300500</div>
<div class="x k" style="top:201px;font-size:10.1px;color:#414141;transform:translateY(0.00px) scaleX(0.9650);right:194.60px;transform-origin:100% 50%;">-16600</div>
<div class="x k" style="top:201px;font-size:10.1px;color:#414141;transform:translateY(0.00px) scaleX(0.9650);right:139.00px;transform-origin:100% 50%;">-5.2</div>
<div class="x k" style="top:201px;font-size:10.1px;color:#414141;transform:translateY(0.00px) scaleX(0.9650);right:3.80px;transform-origin:100% 50%;">-0.5</div>
<div class="x k" style="top:223px;font-size:10.1px;color:#414141;transform:translateY(0.55px) scaleX(0.9650);left:13.20px;transform-origin:0 50%;">5</div>
<div class="x k" style="top:223px;font-size:10.1px;color:#414141;transform:translateY(0.55px) scaleX(0.9650);left:33.50px;transform-origin:0 50%;">5</div>
<div class="x k" style="top:223px;font-size:10.1px;color:#414141;transform:translateY(0.55px) scaleX(1.0224);left:93.90px;transform-origin:0 50%;">Polygon</div>
<div class="x k" style="top:223px;font-size:10.1px;color:#414141;transform:translateY(0.55px) scaleX(0.9259);left:261.10px;transform-origin:0 50%;">KOWLOON CITY</div>
<div class="x k" style="top:223px;font-size:10.1px;color:#414141;transform:translateY(0.55px) scaleX(0.9650);left:382.55px;transform-origin:0 50%;">408600</div>
<div class="x k" style="top:223px;font-size:10.1px;color:#414141;transform:translateY(0.55px) scaleX(0.9650);left:423.20px;transform-origin:0 50%;">411500</div>
<div class="x k" style="top:223px;font-size:10.1px;color:#414141;transform:translateY(0.55px) scaleX(0.9650);left:463.85px;transform-origin:0 50%;">409200</div>
<div class="x k" style="top:223px;font-size:10.1px;color:#414141;transform:translateY(0.55px) scaleX(0.9650);left:504.50px;transform-origin:0 50%;">411700</div>
<div class="x k" style="top:223px;font-size:10.1px;color:#414141;transform:translateY(0.55px) scaleX(0.9650);left:545.15px;transform-origin:0 50%;">417000</div>
<div class="x k" style="top:223px;font-size:10.1px;color:#414141;transform:translateY(0.55px) scaleX(0.9650);left:585.80px;transform-origin:0 50%;">422500</div>
<div class="x k" style="top:223px;font-size:10.1px;color:#414141;transform:translateY(0.55px) scaleX(0.9650);left:626.45px;transform-origin:0 50%;">426000</div>
<div class="x k" style="top:223px;font-size:10.1px;color:#414141;transform:translateY(0.55px) scaleX(0.9650);left:667.10px;transform-origin:0 50%;">432900</div>
<div class="x k" style="top:223px;font-size:10.1px;color:#414141;transform:translateY(0.55px) scaleX(0.9650);left:707.75px;transform-origin:0 50%;">438500</div>
<div class="x k" style="top:223px;font-size:10.1px;color:#414141;transform:translateY(0.55px) scaleX(0.9650);left:748.40px;transform-origin:0 50%;">441000</div>
<div class="x k" style="top:223px;font-size:10.1px;color:#414141;transform:translateY(0.55px) scaleX(0.9650);left:789.05px;transform-origin:0 50%;">454200</div>
<div class="x k" style="top:223px;font-size:10.1px;color:#414141;transform:translateY(0.55px) scaleX(0.9650);right:194.60px;transform-origin:100% 50%;">45700</div>
<div class="x k" style="top:223px;font-size:10.1px;color:#414141;transform:translateY(0.55px) scaleX(0.9650);right:139.00px;transform-origin:100% 50%;">11.2</div>
<div class="x k" style="top:223px;font-size:10.1px;color:#414141;transform:translateY(0.55px) scaleX(0.9650);right:3.80px;transform-origin:100% 50%;">1.1</div>
<div class="x k" style="top:246px;font-size:10.1px;color:#414141;transform:translateY(0.10px) scaleX(0.9650);left:13.20px;transform-origin:0 50%;">6</div>
<div class="x k" style="top:246px;font-size:10.1px;color:#414141;transform:translateY(0.10px) scaleX(0.9650);left:33.50px;transform-origin:0 50%;">6</div>
<div class="x k" style="top:246px;font-size:10.1px;color:#414141;transform:translateY(0.10px) scaleX(1.0224);left:93.90px;transform-origin:0 50%;">Polygon</div>
<div class="x k" style="top:246px;font-size:10.1px;color:#414141;transform:translateY(0.10px) scaleX(0.9305);left:261.10px;transform-origin:0 50%;">KWUN TONG</div>
<div class="x k" style="top:246px;font-size:10.1px;color:#414141;transform:translateY(0.10px) scaleX(0.9650);left:382.55px;transform-origin:0 50%;">645400</div>
<div class="x k" style="top:246px;font-size:10.1px;color:#414141;transform:translateY(0.10px) scaleX(0.9650);left:423.20px;transform-origin:0 50%;">645000</div>
<div class="x k" style="top:246px;font-size:10.1px;color:#414141;transform:translateY(0.10px) scaleX(0.9650);left:463.85px;transform-origin:0 50%;">657100</div>
<div class="x k" style="top:246px;font-size:10.1px;color:#414141;transform:translateY(0.10px) scaleX(0.9650);left:504.50px;transform-origin:0 50%;">665100</div>
<div class="x k" style="top:246px;font-size:10.1px;color:#414141;transform:translateY(0.10px) scaleX(0.9650);left:545.15px;transform-origin:0 50%;">680900</div>
<div class="x k" style="top:246px;font-size:10.1px;color:#414141;transform:translateY(0.10px) scaleX(0.9650);left:585.80px;transform-origin:0 50%;">681200</div>
<div class="x k" style="top:246px;font-size:10.1px;color:#414141;transform:translateY(0.10px) scaleX(0.9650);left:626.45px;transform-origin:0 50%;">676800</div>
<div class="x k" style="top:246px;font-size:10.1px;color:#414141;transform:translateY(0.10px) scaleX(0.9650);left:667.10px;transform-origin:0 50%;">678300</div>
<div class="x k" style="top:246px;font-size:10.1px;color:#414141;transform:translateY(0.10px) scaleX(0.9650);left:707.75px;transform-origin:0 50%;">675000</div>
<div class="x k" style="top:246px;font-size:10.1px;color:#414141;transform:translateY(0.10px) scaleX(0.9650);left:748.40px;transform-origin:0 50%;">683600</div>
<div class="x k" style="top:246px;font-size:10.1px;color:#414141;transform:translateY(0.10px) scaleX(0.9650);left:789.05px;transform-origin:0 50%;">686800</div>
<div class="x k" style="top:246px;font-size:10.1px;color:#414141;transform:translateY(0.10px) scaleX(0.9650);right:194.60px;transform-origin:100% 50%;">41400</div>
<div class="x k" style="top:246px;font-size:10.1px;color:#414141;transform:translateY(0.10px) scaleX(0.9650);right:139.00px;transform-origin:100% 50%;">6.4</div>
<div class="x k" style="top:246px;font-size:10.1px;color:#414141;transform:translateY(0.10px) scaleX(0.9650);right:3.80px;transform-origin:100% 50%;">0.6</div>
<div class="x k" style="top:268px;font-size:10.1px;color:#414141;transform:translateY(0.65px) scaleX(0.9650);left:13.20px;transform-origin:0 50%;">7</div>
<div class="x k" style="top:268px;font-size:10.1px;color:#414141;transform:translateY(0.65px) scaleX(0.9650);left:33.50px;transform-origin:0 50%;">7</div>
<div class="x k" style="top:268px;font-size:10.1px;color:#414141;transform:translateY(0.65px) scaleX(1.0224);left:93.90px;transform-origin:0 50%;">Polygon</div>
<div class="x k" style="top:268px;font-size:10.1px;color:#414141;transform:translateY(0.65px) scaleX(0.9036);left:261.10px;transform-origin:0 50%;">SAI KUNG</div>
<div class="x k" style="top:268px;font-size:10.1px;color:#414141;transform:translateY(0.65px) scaleX(0.9650);left:382.55px;transform-origin:0 50%;">451600</div>
<div class="x k" style="top:268px;font-size:10.1px;color:#414141;transform:translateY(0.65px) scaleX(0.9650);left:423.20px;transform-origin:0 50%;">460100</div>
<div class="x k" style="top:268px;font-size:10.1px;color:#414141;transform:translateY(0.65px) scaleX(0.9650);left:463.85px;transform-origin:0 50%;">465200</div>
<div class="x k" style="top:268px;font-size:10.1px;color:#414141;transform:translateY(0.65px) scaleX(0.9650);left:504.50px;transform-origin:0 50%;">473000</div>
<div class="x k" style="top:268px;font-size:10.1px;color:#414141;transform:translateY(0.65px) scaleX(0.9650);left:545.15px;transform-origin:0 50%;">481600</div>
<div class="x k" style="top:268px;font-size:10.1px;color:#414141;transform:translateY(0.65px) scaleX(0.9650);left:585.80px;transform-origin:0 50%;">485500</div>
<div class="x k" style="top:268px;font-size:10.1px;color:#414141;transform:translateY(0.65px) scaleX(0.9650);left:626.45px;transform-origin:0 50%;">490200</div>
<div class="x k" style="top:268px;font-size:10.1px;color:#414141;transform:translateY(0.65px) scaleX(0.9650);left:667.10px;transform-origin:0 50%;">506000</div>
<div class="x k" style="top:268px;font-size:10.1px;color:#414141;transform:translateY(0.65px) scaleX(0.9650);left:707.75px;transform-origin:0 50%;">519300</div>
<div class="x k" style="top:268px;font-size:10.1px;color:#414141;transform:translateY(0.65px) scaleX(0.9650);left:748.40px;transform-origin:0 50%;">527800</div>
<div class="x k" style="top:268px;font-size:10.1px;color:#414141;transform:translateY(0.65px) scaleX(0.9650);left:789.05px;transform-origin:0 50%;">534700</div>
<div class="x k" style="top:268px;font-size:10.1px;color:#414141;transform:translateY(0.65px) scaleX(0.9650);right:194.60px;transform-origin:100% 50%;">83100</div>
<div class="x k" style="top:268px;font-size:10.1px;color:#414141;transform:translateY(0.65px) scaleX(0.9650);right:139.00px;transform-origin:100% 50%;">18.4</div>
<div class="x k" style="top:268px;font-size:10.1px;color:#414141;transform:translateY(0.65px) scaleX(0.9650);right:3.80px;transform-origin:100% 50%;">1.7</div>
<div class="x k" style="top:291px;font-size:10.1px;color:#414141;transform:translateY(0.20px) scaleX(0.9650);left:13.20px;transform-origin:0 50%;">8</div>
<div class="x k" style="top:291px;font-size:10.1px;color:#414141;transform:translateY(0.20px) scaleX(0.9650);left:33.50px;transform-origin:0 50%;">8</div>
<div class="x k" style="top:291px;font-size:10.1px;color:#414141;transform:translateY(0.20px) scaleX(1.0224);left:93.90px;transform-origin:0 50%;">Polygon</div>
<div class="x k" style="top:291px;font-size:10.1px;color:#414141;transform:translateY(0.20px) scaleX(0.8873);left:261.10px;transform-origin:0 50%;">TAI PO</div>
<div class="x k" style="top:291px;font-size:10.1px;color:#414141;transform:translateY(0.20px) scaleX(0.9650);left:382.55px;transform-origin:0 50%;">305800</div>
<div class="x k" style="top:291px;font-size:10.1px;color:#414141;transform:translateY(0.20px) scaleX(0.9650);left:423.20px;transform-origin:0 50%;">310500</div>
<div class="x k" style="top:291px;font-size:10.1px;color:#414141;transform:translateY(0.20px) scaleX(0.9650);left:463.85px;transform-origin:0 50%;">314800</div>
<div class="x k" style="top:291px;font-size:10.1px;color:#414141;transform:translateY(0.20px) scaleX(0.9650);left:504.50px;transform-origin:0 50%;">318900</div>
<div class="x k" style="top:291px;font-size:10.1px;color:#414141;transform:translateY(0.20px) scaleX(0.9650);left:545.15px;transform-origin:0 50%;">320500</div>
<div class="x k" style="top:291px;font-size:10.1px;color:#414141;transform:translateY(0.20px) scaleX(0.9650);left:585.80px;transform-origin:0 50%;">320800</div>
<div class="x k" style="top:291px;font-size:10.1px;color:#414141;transform:translateY(0.20px) scaleX(0.9650);left:626.45px;transform-origin:0 50%;">327600</div>
<div class="x k" style="top:291px;font-size:10.1px;color:#414141;transform:translateY(0.20px) scaleX(0.9650);left:667.10px;transform-origin:0 50%;">340600</div>
<div class="x k" style="top:291px;font-size:10.1px;color:#414141;transform:translateY(0.20px) scaleX(0.9650);left:707.75px;transform-origin:0 50%;">353300</div>
<div class="x k" style="top:291px;font-size:10.1px;color:#414141;transform:translateY(0.20px) scaleX(0.9650);left:748.40px;transform-origin:0 50%;">376700</div>
<div class="x k" style="top:291px;font-size:10.1px;color:#414141;transform:translateY(0.20px) scaleX(0.9650);left:789.05px;transform-origin:0 50%;">381000</div>
<div class="x k" style="top:291px;font-size:10.1px;color:#414141;transform:translateY(0.20px) scaleX(0.9650);right:194.60px;transform-origin:100% 50%;">75100</div>
<div class="x k" style="top:291px;font-size:10.1px;color:#414141;transform:translateY(0.20px) scaleX(0.9650);right:139.00px;transform-origin:100% 50%;">24.6</div>
<div class="x k" style="top:291px;font-size:10.1px;color:#414141;transform:translateY(0.20px) scaleX(0.9650);right:3.80px;transform-origin:100% 50%;">2.2</div>
<div class="x k" style="top:313px;font-size:10.1px;color:#414141;transform:translateY(0.75px) scaleX(0.9650);left:13.20px;transform-origin:0 50%;">9</div>
<div class="x k" style="top:313px;font-size:10.1px;color:#414141;transform:translateY(0.75px) scaleX(0.9650);left:33.50px;transform-origin:0 50%;">9</div>
<div class="x k" style="top:313px;font-size:10.1px;color:#414141;transform:translateY(0.75px) scaleX(1.0224);left:93.90px;transform-origin:0 50%;">Polygon</div>
<div class="x k" style="top:313px;font-size:10.1px;color:#414141;transform:translateY(0.75px) scaleX(0.9106);left:261.10px;transform-origin:0 50%;">SHA TIN</div>
<div class="x k" style="top:313px;font-size:10.1px;color:#414141;transform:translateY(0.75px) scaleX(0.9650);left:382.55px;transform-origin:0 50%;">652600</div>
<div class="x k" style="top:313px;font-size:10.1px;color:#414141;transform:translateY(0.75px) scaleX(0.9650);left:423.20px;transform-origin:0 50%;">664600</div>
<div class="x k" style="top:313px;font-size:10.1px;color:#414141;transform:translateY(0.75px) scaleX(0.9650);left:463.85px;transform-origin:0 50%;">684800</div>
<div class="x k" style="top:313px;font-size:10.1px;color:#414141;transform:translateY(0.75px) scaleX(0.9650);left:504.50px;transform-origin:0 50%;">693500</div>
<div class="x k" style="top:313px;font-size:10.1px;color:#414141;transform:translateY(0.75px) scaleX(0.9650);left:545.15px;transform-origin:0 50%;">694100</div>
<div class="x k" style="top:313px;font-size:10.1px;color:#414141;transform:translateY(0.75px) scaleX(0.9650);left:585.80px;transform-origin:0 50%;">704600</div>
<div class="x k" style="top:313px;font-size:10.1px;color:#414141;transform:translateY(0.75px) scaleX(0.9650);left:626.45px;transform-origin:0 50%;">715800</div>
<div class="x k" style="top:313px;font-size:10.1px;color:#414141;transform:translateY(0.75px) scaleX(0.9650);left:667.10px;transform-origin:0 50%;">721600</div>
<div class="x k" style="top:313px;font-size:10.1px;color:#414141;transform:translateY(0.75px) scaleX(0.9650);left:707.75px;transform-origin:0 50%;">724000</div>
<div class="x k" style="top:313px;font-size:10.1px;color:#414141;transform:translateY(0.75px) scaleX(0.9650);left:748.40px;transform-origin:0 50%;">722100</div>
<div class="x k" style="top:313px;font-size:10.1px;color:#414141;transform:translateY(0.75px) scaleX(0.9650);left:789.05px;transform-origin:0 50%;">721100</div>
<div class="x k" style="top:313px;font-size:10.1px;color:#414141;transform:translateY(0.75px) scaleX(0.9650);right:194.60px;transform-origin:100% 50%;">68500</div>
<div class="x k" style="top:313px;font-size:10.1px;color:#414141;transform:translateY(0.75px) scaleX(0.9650);right:139.00px;transform-origin:100% 50%;">10.5</div>
<div class="x k" style="top:313px;font-size:10.1px;color:#414141;transform:translateY(0.75px) scaleX(0.9650);right:3.80px;transform-origin:100% 50%;">1</div>
<div class="x k" style="top:336px;font-size:10.1px;color:#414141;transform:translateY(0.30px) scaleX(0.9650);left:13.20px;transform-origin:0 50%;">10</div>
<div class="x k" style="top:336px;font-size:10.1px;color:#414141;transform:translateY(0.30px) scaleX(0.9650);left:33.50px;transform-origin:0 50%;">10</div>
<div class="x k" style="top:336px;font-size:10.1px;color:#414141;transform:translateY(0.30px) scaleX(1.0224);left:93.90px;transform-origin:0 50%;">Polygon</div>
<div class="x k" style="top:336px;font-size:10.1px;color:#414141;transform:translateY(0.30px) scaleX(0.9215);left:261.10px;transform-origin:0 50%;">NORTH</div>
<div class="x k" style="top:336px;font-size:10.1px;color:#414141;transform:translateY(0.30px) scaleX(0.9650);left:382.55px;transform-origin:0 50%;">308300</div>
<div class="x k" style="top:336px;font-size:10.1px;color:#414141;transform:translateY(0.30px) scaleX(0.9650);left:423.20px;transform-origin:0 50%;">315200</div>
<div class="x k" style="top:336px;font-size:10.1px;color:#414141;transform:translateY(0.30px) scaleX(0.9650);left:463.85px;transform-origin:0 50%;">315600</div>
<div class="x k" style="top:336px;font-size:10.1px;color:#414141;transform:translateY(0.30px) scaleX(0.9650);left:504.50px;transform-origin:0 50%;">315600</div>
<div class="x k" style="top:336px;font-size:10.1px;color:#414141;transform:translateY(0.30px) scaleX(0.9650);left:545.15px;transform-origin:0 50%;">315300</div>
<div class="x k" style="top:336px;font-size:10.1px;color:#414141;transform:translateY(0.30px) scaleX(0.9650);left:585.80px;transform-origin:0 50%;">314300</div>
<div class="x k" style="top:336px;font-size:10.1px;color:#414141;transform:translateY(0.30px) scaleX(0.9650);left:626.45px;transform-origin:0 50%;">320000</div>
<div class="x k" style="top:336px;font-size:10.1px;color:#414141;transform:translateY(0.30px) scaleX(0.9650);left:667.10px;transform-origin:0 50%;">318300</div>
<div class="x k" style="top:336px;font-size:10.1px;color:#414141;transform:translateY(0.30px) scaleX(0.9650);left:707.75px;transform-origin:0 50%;">350800</div>
<div class="x k" style="top:336px;font-size:10.1px;color:#414141;transform:translateY(0.30px) scaleX(0.9650);left:748.40px;transform-origin:0 50%;">352300</div>
<div class="x k" style="top:336px;font-size:10.1px;color:#414141;transform:translateY(0.30px) scaleX(0.9650);left:789.05px;transform-origin:0 50%;">378500</div>
<div class="x k" style="top:336px;font-size:10.1px;color:#414141;transform:translateY(0.30px) scaleX(0.9650);right:194.60px;transform-origin:100% 50%;">70200</div>
<div class="x k" style="top:336px;font-size:10.1px;color:#414141;transform:translateY(0.30px) scaleX(0.9650);right:139.00px;transform-origin:100% 50%;">22.8</div>
<div class="x k" style="top:336px;font-size:10.1px;color:#414141;transform:translateY(0.30px) scaleX(0.9650);right:3.80px;transform-origin:100% 50%;">2.1</div>
<div class="x k" style="top:358px;font-size:10.1px;color:#414141;transform:translateY(0.85px) scaleX(0.9650);left:13.20px;transform-origin:0 50%;">11</div>
<div class="x k" style="top:358px;font-size:10.1px;color:#414141;transform:translateY(0.85px) scaleX(0.9650);left:33.50px;transform-origin:0 50%;">11</div>
<div class="x k" style="top:358px;font-size:10.1px;color:#414141;transform:translateY(0.85px) scaleX(1.0224);left:93.90px;transform-origin:0 50%;">Polygon</div>
<div class="x k" style="top:358px;font-size:10.1px;color:#414141;transform:translateY(0.85px) scaleX(0.8936);left:261.10px;transform-origin:0 50%;">CENTRAL &amp; WESTERN</div>
<div class="x k" style="top:358px;font-size:10.1px;color:#414141;transform:translateY(0.85px) scaleX(0.9650);left:382.55px;transform-origin:0 50%;">251900</div>
<div class="x k" style="top:358px;font-size:10.1px;color:#414141;transform:translateY(0.85px) scaleX(0.9650);left:423.20px;transform-origin:0 50%;">249400</div>
<div class="x k" style="top:358px;font-size:10.1px;color:#414141;transform:translateY(0.85px) scaleX(0.9650);left:463.85px;transform-origin:0 50%;">248200</div>
<div class="x k" style="top:358px;font-size:10.1px;color:#414141;transform:translateY(0.85px) scaleX(0.9650);left:504.50px;transform-origin:0 50%;">248900</div>
<div class="x k" style="top:358px;font-size:10.1px;color:#414141;transform:translateY(0.85px) scaleX(0.9650);left:545.15px;transform-origin:0 50%;">250200</div>
<div class="x k" style="top:358px;font-size:10.1px;color:#414141;transform:translateY(0.85px) scaleX(0.9650);left:585.80px;transform-origin:0 50%;">248700</div>
<div class="x k" style="top:358px;font-size:10.1px;color:#414141;transform:translateY(0.85px) scaleX(0.9650);left:626.45px;transform-origin:0 50%;">246800</div>
<div class="x k" style="top:358px;font-size:10.1px;color:#414141;transform:translateY(0.85px) scaleX(0.9650);left:667.10px;transform-origin:0 50%;">243400</div>
<div class="x k" style="top:358px;font-size:10.1px;color:#414141;transform:translateY(0.85px) scaleX(0.9650);left:707.75px;transform-origin:0 50%;">238800</div>
<div class="x k" style="top:358px;font-size:10.1px;color:#414141;transform:translateY(0.85px) scaleX(0.9650);left:748.40px;transform-origin:0 50%;">236800</div>
<div class="x k" style="top:358px;font-size:10.1px;color:#414141;transform:translateY(0.85px) scaleX(0.9650);left:789.05px;transform-origin:0 50%;">233900</div>
<div class="x k" style="top:358px;font-size:10.1px;color:#414141;transform:translateY(0.85px) scaleX(0.9650);right:194.60px;transform-origin:100% 50%;">-18000</div>
<div class="x k" style="top:358px;font-size:10.1px;color:#414141;transform:translateY(0.85px) scaleX(0.9650);right:139.00px;transform-origin:100% 50%;">-7.1</div>
<div class="x k" style="top:358px;font-size:10.1px;color:#414141;transform:translateY(0.85px) scaleX(0.9650);right:3.80px;transform-origin:100% 50%;">-0.7</div>
<div class="x k" style="top:381px;font-size:10.1px;color:#414141;transform:translateY(0.40px) scaleX(0.9650);left:13.20px;transform-origin:0 50%;">12</div>
<div class="x k" style="top:381px;font-size:10.1px;color:#414141;transform:translateY(0.40px) scaleX(0.9650);left:33.50px;transform-origin:0 50%;">12</div>
<div class="x k" style="top:381px;font-size:10.1px;color:#414141;transform:translateY(0.40px) scaleX(1.0224);left:93.90px;transform-origin:0 50%;">Polygon</div>
<div class="x k" style="top:381px;font-size:10.1px;color:#414141;transform:translateY(0.40px) scaleX(0.9659);left:261.10px;transform-origin:0 50%;">WAN CHAI</div>
<div class="x k" style="top:381px;font-size:10.1px;color:#414141;transform:translateY(0.40px) scaleX(0.9650);left:382.55px;transform-origin:0 50%;">180700</div>
<div class="x k" style="top:381px;font-size:10.1px;color:#414141;transform:translateY(0.40px) scaleX(0.9650);left:423.20px;transform-origin:0 50%;">179700</div>
<div class="x k" style="top:381px;font-size:10.1px;color:#414141;transform:translateY(0.40px) scaleX(0.9650);left:463.85px;transform-origin:0 50%;">180200</div>
<div class="x k" style="top:381px;font-size:10.1px;color:#414141;transform:translateY(0.40px) scaleX(0.9650);left:504.50px;transform-origin:0 50%;">181600</div>
<div class="x k" style="top:381px;font-size:10.1px;color:#414141;transform:translateY(0.40px) scaleX(0.9650);left:545.15px;transform-origin:0 50%;">182000</div>
<div class="x k" style="top:381px;font-size:10.1px;color:#414141;transform:translateY(0.40px) scaleX(0.9650);left:585.80px;transform-origin:0 50%;">180300</div>
<div class="x k" style="top:381px;font-size:10.1px;color:#414141;transform:translateY(0.40px) scaleX(0.9650);left:626.45px;transform-origin:0 50%;">178200</div>
<div class="x k" style="top:381px;font-size:10.1px;color:#414141;transform:translateY(0.40px) scaleX(0.9650);left:667.10px;transform-origin:0 50%;">175400</div>
<div class="x k" style="top:381px;font-size:10.1px;color:#414141;transform:translateY(0.40px) scaleX(0.9650);left:707.75px;transform-origin:0 50%;">169500</div>
<div class="x k" style="top:381px;font-size:10.1px;color:#414141;transform:translateY(0.40px) scaleX(0.9650);left:748.40px;transform-origin:0 50%;">166100</div>
<div class="x k" style="top:381px;font-size:10.1px;color:#414141;transform:translateY(0.40px) scaleX(0.9650);left:789.05px;transform-origin:0 50%;">162500</div>
<div class="x k" style="top:381px;font-size:10.1px;color:#414141;transform:translateY(0.40px) scaleX(0.9650);right:194.60px;transform-origin:100% 50%;">-18200</div>
<div class="x k" style="top:381px;font-size:10.1px;color:#414141;transform:translateY(0.40px) scaleX(0.9650);right:139.00px;transform-origin:100% 50%;">-10.1</div>
<div class="x k" style="top:381px;font-size:10.1px;color:#414141;transform:translateY(0.40px) scaleX(0.9650);right:3.80px;transform-origin:100% 50%;">-1.1</div>
<div class="x k" style="top:403px;font-size:10.1px;color:#414141;transform:translateY(0.95px) scaleX(0.9650);left:13.20px;transform-origin:0 50%;">13</div>
<div class="x k" style="top:403px;font-size:10.1px;color:#414141;transform:translateY(0.95px) scaleX(0.9650);left:33.50px;transform-origin:0 50%;">13</div>
<div class="x k" style="top:403px;font-size:10.1px;color:#414141;transform:translateY(0.95px) scaleX(1.0224);left:93.90px;transform-origin:0 50%;">Polygon</div>
<div class="x k" style="top:403px;font-size:10.1px;color:#414141;transform:translateY(0.95px) scaleX(0.8409);left:261.10px;transform-origin:0 50%;">EASTERN</div>
<div class="x k" style="top:403px;font-size:10.1px;color:#414141;transform:translateY(0.95px) scaleX(0.9650);left:382.55px;transform-origin:0 50%;">556000</div>
<div class="x k" style="top:403px;font-size:10.1px;color:#414141;transform:translateY(0.95px) scaleX(0.9650);left:423.20px;transform-origin:0 50%;">551400</div>
<div class="x k" style="top:403px;font-size:10.1px;color:#414141;transform:translateY(0.95px) scaleX(0.9650);left:463.85px;transform-origin:0 50%;">547900</div>
<div class="x k" style="top:403px;font-size:10.1px;color:#414141;transform:translateY(0.95px) scaleX(0.9650);left:504.50px;transform-origin:0 50%;">545400</div>
<div class="x k" style="top:403px;font-size:10.1px;color:#414141;transform:translateY(0.95px) scaleX(0.9650);left:545.15px;transform-origin:0 50%;">542400</div>
<div class="x k" style="top:403px;font-size:10.1px;color:#414141;transform:translateY(0.95px) scaleX(0.9650);left:585.80px;transform-origin:0 50%;">538400</div>
<div class="x k" style="top:403px;font-size:10.1px;color:#414141;transform:translateY(0.95px) scaleX(0.9650);left:626.45px;transform-origin:0 50%;">536700</div>
<div class="x k" style="top:403px;font-size:10.1px;color:#414141;transform:translateY(0.95px) scaleX(0.9650);left:667.10px;transform-origin:0 50%;">533100</div>
<div class="x k" style="top:403px;font-size:10.1px;color:#414141;transform:translateY(0.95px) scaleX(0.9650);left:707.75px;transform-origin:0 50%;">521800</div>
<div class="x k" style="top:403px;font-size:10.1px;color:#414141;transform:translateY(0.95px) scaleX(0.9650);left:748.40px;transform-origin:0 50%;">519400</div>
<div class="x k" style="top:403px;font-size:10.1px;color:#414141;transform:translateY(0.95px) scaleX(0.9650);left:789.05px;transform-origin:0 50%;">513200</div>
<div class="x k" style="top:403px;font-size:10.1px;color:#414141;transform:translateY(0.95px) scaleX(0.9650);right:194.60px;transform-origin:100% 50%;">-42700</div>
<div class="x k" style="top:403px;font-size:10.1px;color:#414141;transform:translateY(0.95px) scaleX(0.9650);right:139.00px;transform-origin:100% 50%;">-7.7</div>
<div class="x k" style="top:403px;font-size:10.1px;color:#414141;transform:translateY(0.95px) scaleX(0.9650);right:3.80px;transform-origin:100% 50%;">-0.8</div>
<div class="x k" style="top:30px;font-size:12.2px;color:#3a3a3a;transform:translateY(0.95px) scaleX(0.7836);left:18.10px;transform-origin:0 50%;">1:239,715</div>
<div class="x k" style="top:31px;font-size:12.1px;color:#414141;transform:translateY(0.35px) scaleX(0.8137);left:562.50px;transform-origin:0 50%;">113.9772005°E 22.2578479°N</div>
<div class="x" style="top:59px;font-size:11.9px;color:#ffffff;transform:translateY(0.20px) scaleX(0.9069);left:30.90px;transform-origin:0 50%;">HongKong_ProjectedPopulation</div>
<div class="x k" style="top:59px;font-size:11.9px;color:#333;transform:translateY(0.20px) scaleX(0.8715);left:233.20px;transform-origin:0 50%;">HongKong_Roads</div>
<div class="x" style="top:84px;font-size:11.3px;color:#434343;transform:translateY(0.10px) scaleX(0.8730);font-weight:bold;left:13.50px;transform-origin:0 50%;">Field:</div>
<div class="x k" style="top:84px;font-size:11.4px;color:#414141;transform:translateY(0.10px) scaleX(0.9220);left:64.70px;transform-origin:0 50%;">Add</div>
<div class="x k" style="top:84px;font-size:11.4px;color:#414141;transform:translateY(0.10px) scaleX(0.9326);left:110.10px;transform-origin:0 50%;">Calculate</div>
<div class="x" style="top:84px;font-size:11.3px;color:#434343;transform:translateY(0.10px) scaleX(0.9167);font-weight:bold;left:170.50px;transform-origin:0 50%;">Selection:</div>
<div class="x k" style="top:84px;font-size:11.4px;color:#414141;transform:translateY(0.10px) scaleX(0.9243);left:244.00px;transform-origin:0 50%;">Select By Attributes</div>
<div class="x k" style="top:84px;font-size:11.4px;color:#414141;transform:translateY(0.10px) scaleX(0.9326);left:362.90px;transform-origin:0 50%;">Switch</div>
<div class="x" style="top:84px;font-size:11.4px;color:#cbcbcb;transform:translateY(0.10px) scaleX(0.8739);left:420.80px;transform-origin:0 50%;">Clear</div>
<div class="x" style="top:84px;font-size:11.4px;color:#cbcbcb;transform:translateY(0.10px) scaleX(0.8713);left:471.70px;transform-origin:0 50%;">Delete</div>
<div class="x" style="top:84px;font-size:11.4px;color:#cbcbcb;transform:translateY(0.10px) scaleX(0.9100);left:527.50px;transform-origin:0 50%;">Copy</div>
</div>
</body>
</html>
